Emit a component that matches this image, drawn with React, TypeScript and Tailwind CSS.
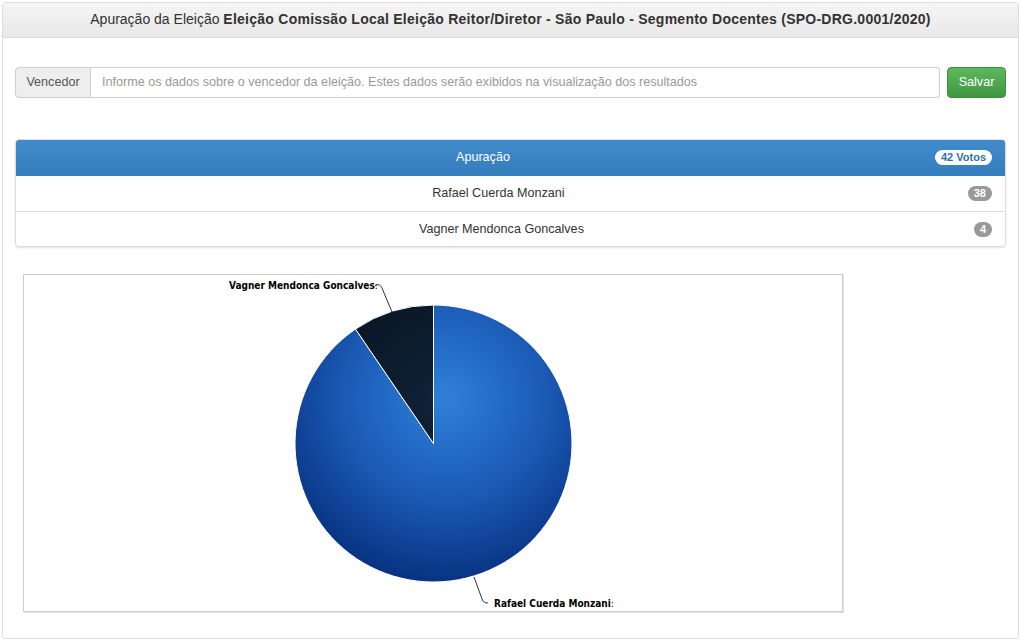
import React from 'react';

const font = { fontFamily: '"Liberation Sans", Arial, sans-serif' };

const candidates = [
  { name: 'Rafael Cuerda Monzani', votes: 38 },
  { name: 'Vagner Mendonca Goncalves', votes: 4 },
];

function PieChart() {
  const cx = 409.5;
  const cy = 168.5;
  const r = 138.5;
  const total = candidates.reduce((s, c) => s + c.votes, 0);
  const a = (candidates[0].votes / total) * Math.PI * 2;
  const ex = cx + r * Math.sin(a);
  const ey = cy - r * Math.cos(a);

  return (
    <svg width="818" height="336" viewBox="0 0 818 336" className="block">
      <defs>
        <radialGradient id="blueGrad" gradientUnits="userSpaceOnUse" cx={cx + 12} cy={cy - 45} r={r * 1.35}>
          <stop offset="0" stopColor="#2f80da" />
          <stop offset="0.55" stopColor="#1a59b4" />
          <stop offset="1" stopColor="#07317f" />
        </radialGradient>
        <radialGradient id="darkGrad" gradientUnits="userSpaceOnUse" cx={cx + 12} cy={cy - 45} r={r * 1.35}>
          <stop offset="0" stopColor="#10233a" />
          <stop offset="1" stopColor="#060f18" />
        </radialGradient>
      </defs>
      <path
        d={`M ${cx} ${cy} L ${cx} ${cy - r} A ${r} ${r} 0 1 1 ${ex} ${ey} Z`}
        fill="url(#blueGrad)"
        stroke="#ffffff"
        strokeWidth="1"
      />
      <path
        d={`M ${cx} ${cy} L ${ex} ${ey} A ${r} ${r} 0 0 1 ${cx} ${cy - r} Z`}
        fill="url(#darkGrad)"
        stroke="#ffffff"
        strokeWidth="1"
      />

      <path d="M 351 11 C 354 9 356 9 358 13 L 368 37" fill="none" stroke="#333" strokeWidth="1" />
      <text x="205" y="14" fontSize="10" fontFamily='"DejaVu Sans Condensed", "Liberation Sans", sans-serif' fill="#000">
        <tspan fontWeight="bold">Vagner Mendonca Goncalves</tspan>
        <tspan>:</tspan>
      </text>

      <path d="M 450 302 L 458 324 C 459 327 461 328 464 328" fill="none" stroke="#333" strokeWidth="1" />
      <text x="470" y="332" fontSize="10" fontFamily='"DejaVu Sans Condensed", "Liberation Sans", sans-serif' fill="#000">
        <tspan fontWeight="bold">Rafael Cuerda Monzani</tspan>
        <tspan>:</tspan>
      </text>
    </svg>
  );
}

export default function App() {
  return (
    <div className="min-h-[641px] w-[1021px] bg-white pt-[2px]" style={font}>
      <div className="mx-[2px] overflow-hidden rounded-[3px] border border-[#dddddd] bg-white">
        <div className="flex h-[35px] items-center justify-center border-b border-[#dddddd] bg-[linear-gradient(180deg,#f5f5f5,#e8e8e8)] pb-[1px] text-[14px] text-[#333]">
          <span>
            Apuração da Eleição{' '}
            <b className="tracking-[0.25px]">
              Eleição Comissão Local Eleição Reitor/Diretor - São Paulo - Segmento Docentes (SPO-DRG.0001/2020)
            </b>
          </span>
        </div>

        <div className="px-[12px] pb-[26px] pt-[29px]">
          <div className="flex h-[31px] items-stretch text-[12.6px]">
            <span className="flex w-[76px] items-center justify-center rounded-l-[4px] border border-[#cccccc] bg-[#eeeeee] text-[#555]">
              Vencedor
            </span>
            <input
              className="flex-1 rounded-r-[4px] border border-l-0 border-[#cccccc] px-[11px] text-[12.6px] text-[#555] placeholder:text-[#999] outline-none"
              placeholder="Informe os dados sobre o vencedor da eleição. Estes dados serão exibidos na visualização dos resultados"
            />
            <button className="ml-[7px] w-[59px] rounded-[4px] border border-[#3e8f3e] bg-[linear-gradient(180deg,#5cb85c,#419641)] text-[12.6px] text-white">
              Salvar
            </button>
          </div>

          <div className="mt-[41px] overflow-hidden rounded-[4px] border border-[#dddddd] shadow-[0_1px_2px_rgba(0,0,0,0.12)]">
            <div className="flex h-[36px] items-center border-b border-[#357ebd] bg-[linear-gradient(180deg,#428bca,#357ebd)] pl-[15px] pr-[13px] text-[12.6px] text-white">
              <span className="flex-1 text-center">Apuração</span>
              <span className="rounded-full bg-white px-[6px] py-[1px] text-[11px] font-bold leading-[13px] text-[#3071a9]">
                42 Votos
              </span>
            </div>
            {candidates.map((c, i) => (
              <div
                key={c.name}
                className={
                  'flex h-[35px] items-center pl-[13px] pr-[13px] text-[12.6px] text-[#333]' +
                  (i > 0 ? ' border-t border-[#dddddd]' : '')
                }
              >
                <span className="flex-1 text-center">{c.name}</span>
                <span className="min-w-[18px] rounded-full bg-[#999999] px-[6px] py-[1px] text-center text-[11px] font-bold leading-[13px] text-white">
                  {c.votes}
                </span>
              </div>
            ))}
          </div>

          <div className="ml-[8px] mt-[27px] w-[820px] border border-[#cccccc] shadow-[1px_1px_0_#e2e2e2]">
            <PieChart />
          </div>
        </div>
      </div>
    </div>
  );
}
